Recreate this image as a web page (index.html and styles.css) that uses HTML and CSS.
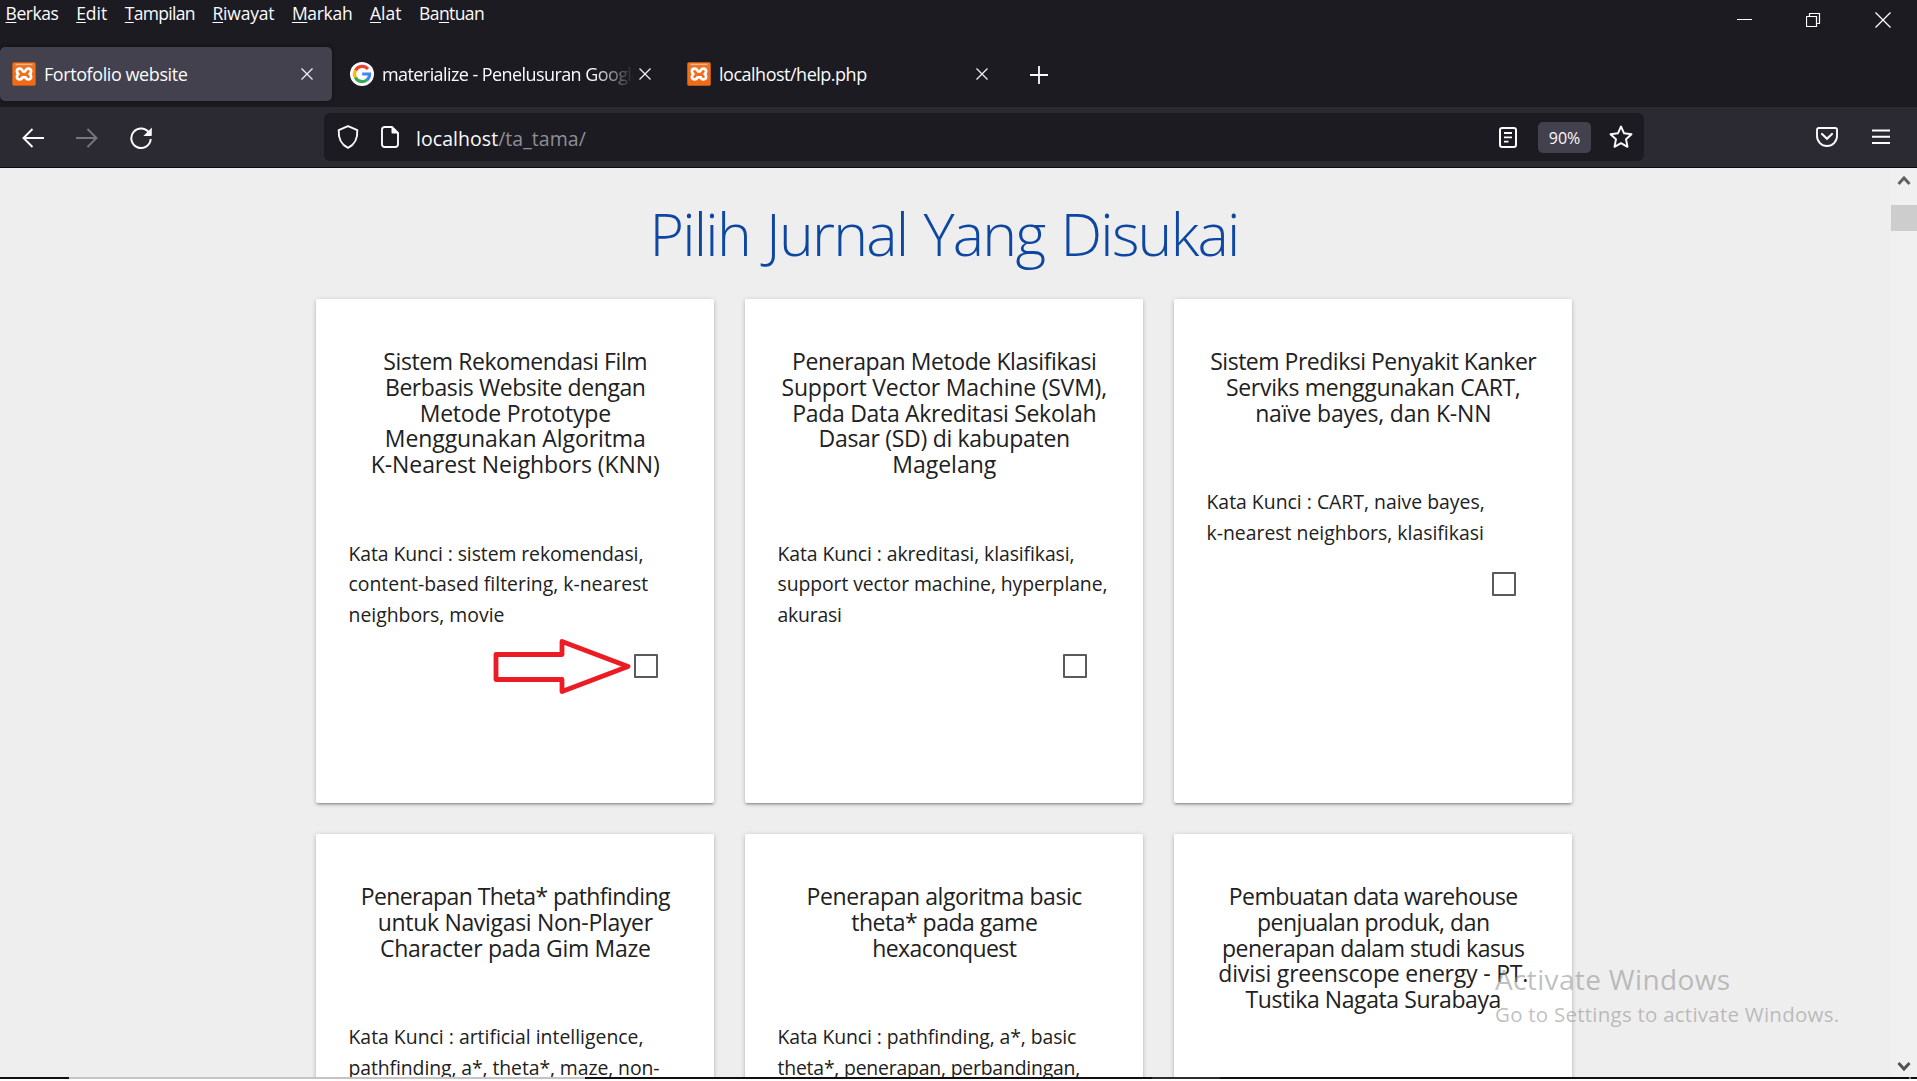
FILE: index.html
```
<!DOCTYPE html>
<html lang="id">
<head>
<meta charset="utf-8">
<title>Fortofolio website</title>
<link rel="stylesheet" href="styles.css">
</head>
<body>
<svg class="defs" width="0" height="0">
  <linearGradient id="orange" x1="0" y1="0" x2="0" y2="1"><stop offset="0" stop-color="#e9772a"/><stop offset="1" stop-color="#f26a16"/></linearGradient>
  <symbol id="xampp" viewBox="0 0 24 24">
    <rect x=".5" y=".5" width="23" height="23" rx="1.5" fill="url(#orange)" stroke="#b45a1c"/>
    <path d="M3.500 2.400h17" stroke="#f8b183" stroke-width="1.400"/>
    <path d="M10.300 8.300C9.200 5.600 4.900 6.200 4.900 9.200c0 1.400.7 2.300 1.500 2.800-.8.600-1.500 1.500-1.500 2.800 0 3.200 4.600 3.600 5.400.6h3.400c.8 3 5.400 2.600 5.400-.6 0-1.300-.7-2.200-1.500-2.800.8-.5 1.500-1.400 1.500-2.800 0-3-4.300-3.600-5.400-.9-.3.900-.6 1.400-1.700 1.400s-1.400-.5-1.700-1.400z" fill="none" stroke="#fff" stroke-width="2.700" stroke-linejoin="round"/>
  </symbol>
  <symbol id="close" viewBox="0 0 14 14"><path d="M1.500 1.500l11 11M12.500 1.500l-11 11" stroke="#f0f0f4" stroke-width="1.300"/></symbol>
</svg>
<div class="window">
  <header class="titlebar">
    <nav class="menu">
      <span class="n4"><u>B</u>erkas</span><span><u>E</u>dit</span><span class="n7"><u>T</u>ampilan</span><span class="n2"><u>R</u>iwayat</span><span class="n3"><u>M</u>arkah</span><span><u>A</u>lat</span><span class="n6">Ba<u>n</u>tuan</span>
    </nav>
    <div class="controls">
      <svg width="16" height="18"><path d="M0 8.500h15" stroke="#fff"/></svg>
      <svg width="16" height="18"><path d="M.5 5.500h10v10H.5zM3.500 5V2.500h10v10H11" fill="none" stroke="#fff" stroke-width="1.200"/></svg>
      <svg width="16" height="18"><path d="M.5 1.500l15 15M15.500 1.500l-15 15" stroke="#fff" stroke-width="1.300"/></svg>
    </div>
  </header>

  <div class="tabs">
    <div class="tab active"><svg class="fav"><use href="#xampp"/></svg><span class="label n4">Fortofolio website</span><svg class="x"><use href="#close"/></svg></div>
    <div class="tab"><svg class="fav" viewBox="0 0 24 24"><circle cx="12" cy="12" r="12" fill="#fff"/><g fill="none" stroke-width="3.200"><path d="M17.900 7A7.600 7.600 0 0 0 5.500 8.400" stroke="#ea4335"/><path d="M5.500 8.200a7.700 7.700 0 0 0 0 7.600" stroke="#fbbc05"/><path d="M5.400 15.500a7.600 7.600 0 0 0 11.800 2.100" stroke="#34a853"/><path d="M12.200 12h7.400a7.600 7.600 0 0 1-2.600 5.800" stroke="#4285f4"/></g></svg><span class="label fade n6">materialize - Penelusuran Google</span><svg class="x"><use href="#close"/></svg></div>
    <div class="tab"><svg class="fav"><use href="#xampp"/></svg><span class="label n5">localhost/help.php</span><svg class="x"><use href="#close"/></svg></div>
    <svg class="plus" width="18" height="18"><path d="M9 0v18M0 9h18" stroke="#fbfbfe" stroke-width="1.800"/></svg>
  </div>

  <div class="toolbar">
    <div class="history">
      <svg width="22" height="22" viewBox="0 0 22 22"><path d="M10.500 2L1.500 11l9 9M1.500 11H22" fill="none" stroke="#fbfbfe" stroke-width="1.900"/></svg>
      <svg width="22" height="22" viewBox="0 0 22 22"><path d="M11.500 2l9 9-9 9M20.500 11H0" fill="none" stroke="#77767f" stroke-width="1.900"/></svg>
      <svg width="24" height="24" viewBox="0 0 24 24"><path d="M20.300 7.200A9.700 9.700 0 1 0 21.700 13" fill="none" stroke="#fbfbfe" stroke-width="2"/><path d="M22.800 1.500v7.700a.8.800 0 0 1-.8.800h-7.600z" fill="#fbfbfe"/></svg>
    </div>
    <div class="urlbar">
      <svg width="22" height="24" viewBox="0 0 22 24"><path d="M11 1.200l9.300 3.900c.4 7.700-1.400 14-9.300 17.700C3.100 19.100 1.300 12.800 1.700 5.100z" fill="none" stroke="#fbfbfe" stroke-width="1.900" stroke-linejoin="round"/></svg>
      <svg class="doc" width="18" height="22" viewBox="0 0 18 22"><path d="M11 1H3.500A2.500 2.500 0 0 0 1 3.500v15A2.500 2.500 0 0 0 3.500 21h11a2.500 2.500 0 0 0 2.500-2.500V7z" fill="none" stroke="#fbfbfe" stroke-width="1.900"/><path d="M10.500 1v5.500a1 1 0 0 0 1 1H17.500z" fill="#fbfbfe"/></svg>
      <span class="url"><b>localhost</b>/ta_tama/</span>
      <svg class="reader" width="18" height="21" viewBox="0 0 18 21"><rect x="1" y="1" width="16" height="19" rx="2.200" fill="none" stroke="#fbfbfe" stroke-width="2"/><path d="M5 6h8M5 10.300h8M5 14.600h4.500" stroke="#fbfbfe" stroke-width="1.800"/></svg>
      <span class="zoom">90%</span>
      <svg width="24" height="24" viewBox="0 0 24 24"><path d="M12 1.500l3.100 6.800 7.400.9-5.500 5 1.500 7.600-6.500-3.700-6.500 3.700L7 14.200l-5.500-5 7.400-.9z" fill="none" stroke="#fbfbfe" stroke-width="1.900" stroke-linejoin="round"/></svg>
    </div>
    <div class="actions">
      <svg width="22" height="20" viewBox="0 0 22 20"><path d="M2.800 1h16.400A1.800 1.800 0 0 1 21 2.800V9a10 10 0 0 1-20 0V2.800A1.800 1.800 0 0 1 2.800 1z" fill="none" stroke="#fbfbfe" stroke-width="1.900"/><path d="M6 7l5 4.800L16 7" fill="none" stroke="#fbfbfe" stroke-width="2.200" stroke-linecap="round"/></svg>
      <svg width="18" height="16"><path d="M0 1.500h18M0 7.700h18M0 14h18" stroke="#fbfbfe" stroke-width="1.900"/></svg>
    </div>
  </div>

  <div class="viewport">
    <main>
      <h1>Pilih Jurnal Yang Disukai</h1>
      <div class="grid">
        <article class="card">
          <h2><span class="n4">Sistem Rekomendasi Film</span><span class="n4">Berbasis Website dengan</span><span class="n2">Metode Prototype</span><span class="n1">Menggunakan Algoritma</span><span class="n1">K-Nearest Neighbors (KNN)</span></h2>
          <p><span class="n1">Kata Kunci : sistem rekomendasi,</span><span>content-based filtering, k-nearest</span><span>neighbors, movie</span></p>
          <div class="check"><i class="box"></i>
            <svg class="arrow" width="140" height="60" viewBox="0 0 140 60"><path d="M4 18.500h66V5.500l66 25-66 25V43.500H4z" fill="none" stroke="#ed1c24" stroke-width="4.800" stroke-linejoin="round"/></svg>
          </div>
        </article>
        <article class="card">
          <h2><span class="n4">Penerapan Metode Klasifikasi</span><span class="n2">Support Vector Machine (SVM),</span><span class="n3">Pada Data Akreditasi Sekolah</span><span class="n3">Dasar (SD) di kabupaten</span><span>Magelang</span></h2>
          <p><span class="n1">Kata Kunci : akreditasi, klasifikasi,</span><span class="n1">support vector machine, hyperplane,</span><span class="n2">akurasi</span></p>
          <div class="check"><i class="box"></i></div>
        </article>
        <article class="card">
          <h2><span class="n5">Sistem Prediksi Penyakit Kanker</span><span class="n3">Serviks menggunakan CART,</span><span class="n2">naïve bayes, dan K-NN</span></h2>
          <p><span>Kata Kunci : CART, naive bayes,</span><span>k-nearest neighbors, klasifikasi</span></p>
          <div class="check"><i class="box"></i></div>
        </article>
        <article class="card">
          <h2><span class="n6">Penerapan Theta* pathfinding</span><span class="n3">untuk Navigasi Non-Player</span><span class="n3">Character pada Gim Maze</span></h2>
          <p><span>Kata Kunci : artificial intelligence,</span><span class="n1">pathfinding, a*, theta*, maze, non-</span></p>
        </article>
        <article class="card">
          <h2><span class="n4">Penerapan algoritma basic</span><span class="n5">theta* pada game</span><span class="n6">hexaconquest</span></h2>
          <p><span class="n1">Kata Kunci : pathfinding, a*, basic</span><span class="n2">theta*, penerapan, perbandingan,</span></p>
        </article>
        <article class="card">
          <h2><span class="n6">Pembuatan data warehouse</span><span class="n5">penjualan produk, dan</span><span class="n5">penerapan dalam studi kasus</span><span class="n2">divisi greenscope energy - PT.</span><span class="n4">Tustika Nagata Surabaya</span></h2>
        </article>
      </div>
    </main>
    <aside class="scrollbar">
      <svg width="14" height="11"><path d="M1.500 9L7 3l5.500 6" fill="none" stroke="#606060" stroke-width="2.900"/></svg>
      <i class="thumb"></i>
      <svg width="14" height="11"><path d="M1.500 2L7 8l5.500-6" fill="none" stroke="#505050" stroke-width="2.900"/></svg>
    </aside>
  </div>
  <footer class="edge"><i class="lit"></i><i class="dim"></i><i class="tick"></i></footer>
</div>
<div class="watermark"><div class="big">Activate Windows</div><div class="small">Go to Settings to activate Windows.</div></div>
</body>
</html>
```
FILE: styles.css
```
* { box-sizing: border-box; }
body { margin: 0; font-family: "Open Sans", "Noto Sans", sans-serif; background: #fff; overflow: hidden; }
svg { display: block; flex: none; }
.defs { position: absolute; }
.window { display: flex; flex-direction: column; width: 1917px; height: 1079px; background: #1c1b22; }

/* Letter spacing steps */
.n1 { letter-spacing: -.09px; }
.n2 { letter-spacing: -.2px; }
.n3 { letter-spacing: -.31px; }
.n4 { letter-spacing: -.42px; }
.n5 { letter-spacing: -.49px; }
.n6 { letter-spacing: -.58px; }
.n7 { letter-spacing: -.69px; }

.titlebar { display: flex; justify-content: space-between; height: 47px; color: #fbfbfe; }
.menu { display: flex; gap: 17.6px; padding-left: 5.500px; font-size: 17.500px; line-height: 27px; }
.menu u { text-decoration-thickness: 1px; text-underline-offset: 2px; }
.controls { display: flex; gap: 53px; padding: 11px 26px 0 0; }

.tabs { display: flex; height: 60px; color: #fbfbfe; font-size: 18px; }
.tab { display: flex; align-items: center; width: 332px; height: 54px; margin-right: 6px; padding: 0 18px 0 12px; border-radius: 5px; }
.tab:nth-child(2) { width: 331px; padding-right: 17px; }
.active { background: #42414d; box-shadow: 0 0 4px rgba(0, 0, 0, .5); }
.fav { width: 24px; height: 24px; margin-right: 8px; }
.label { flex: 1; white-space: nowrap; overflow: hidden; }
.fade { -webkit-mask-image: linear-gradient(to right, #000 84%, transparent 100%); mask-image: linear-gradient(to right, #000 84%, transparent 100%); }
.x { width: 14px; height: 14px; margin-left: 4px; }
.plus { margin: 19px 0 0 17px; }

.toolbar { display: flex; align-items: center; height: 61px; padding: 0 27px 0 22px; background: #2b2a33; border-bottom: 1px solid #0c0c0d; color: #fbfbfe; }
.history { display: flex; align-items: center; gap: 32px; width: 302px; padding-top: 2px; }
.history svg:last-child { margin-left: -1px; }
.urlbar { display: flex; align-items: center; width: 1320px; height: 48px; padding: 0 11px 0 13px; background: #1c1b22; border-radius: 6px; }
.doc { margin: 0 17px 0 22px; }
.url { flex: 1; padding-top: 2px; font-size: 19.500px; letter-spacing: .05px; color: #8f8f98; }
.url b { font-weight: 400; color: #fbfbfe; }
.zoom { width: 53px; height: 31px; margin: 0 18px 0 21px; padding-top: 1px; border-radius: 5px; background: #42414d; font-size: 16px; line-height: 31px; text-align: center; }
.actions { display: flex; align-items: center; justify-content: flex-end; flex: 1; gap: 34px; }

.viewport { display: flex; height: 909px; background: #eee; overflow: hidden; }
main { width: 1891px; padding: 33px 0 0 316px; }
h1 { width: 1256px; margin: 0 0 33px; color: #0d47a1; font-size: 59px; line-height: 65px; font-weight: 300; letter-spacing: -1.75px; word-spacing: 2.500px; text-align: center; }
.grid { display: grid; grid-template-columns: repeat(3, 398px); gap: 31px; }
.card { height: 504px; padding: 50px 32px 0 32.500px; background: #fff; border-radius: 2px; color: #212121; box-shadow: 0 2px 2px rgba(0, 0, 0, .14), 0 3px 1px -2px rgba(0, 0, 0, .12), 0 1px 5px rgba(0, 0, 0, .2); white-space: nowrap; }
.card h2 span, .card p span { display: block; }
h2 { margin: 0 0 61px; font-size: 23px; line-height: 25.800px; font-weight: 400; text-align: center; }
.card p { margin: 0 0 24px; font-size: 19.400px; line-height: 30.500px; }
.check { position: relative; display: flex; justify-content: flex-end; padding-right: 24px; }
.box { width: 24px; height: 24px; border: 2px solid #5a5a5a; border-radius: 1px; }
.arrow { position: absolute; right: 50px; top: -18px; }

.scrollbar { display: flex; flex-direction: column; align-items: center; width: 26px; padding: 7px 0 5px; background: #f0f0f0; }
.thumb { width: 26px; height: 26px; margin: 19px 0 auto; background: #cdcdcd; }

.edge { display: flex; height: 2px; background: #101014; }
.lit { width: 516px; margin-left: 69px; background: #c4c4c4; }
.dim { width: 68px; margin-left: 567px; background: #2c2c30; }
.tick { width: 2px; margin-left: 689px; background: #777; }

.watermark { position: absolute; left: 1495px; top: 960px; color: rgba(150, 150, 150, .6); white-space: nowrap; }
.big { font-size: 28px; line-height: 38px; letter-spacing: .35px; }
.small { font-size: 20.500px; line-height: 32px; letter-spacing: .24px; }
```
